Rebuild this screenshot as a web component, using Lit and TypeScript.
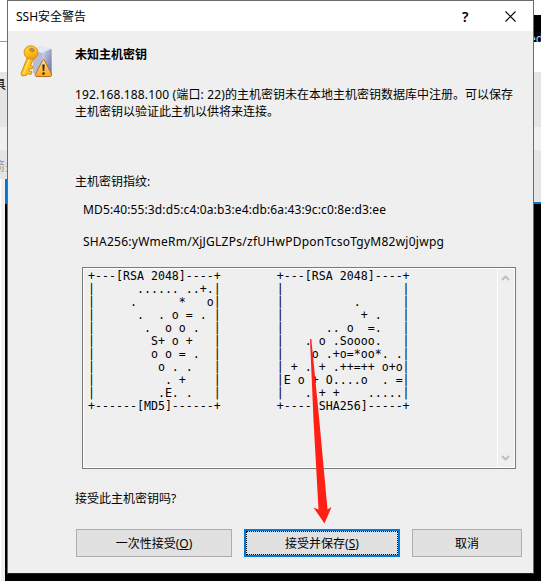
import { LitElement, html, css } from "lit";
import { customElement } from "lit/decorators.js";

const MD5_ART = [
  "+---[RSA 2048]----+",
  "|      ...... ..+.|",
  "|     .      *   o|",
  "|      .  . o = . |",
  "|       .  o o .  |",
  "|        S+ o +   |",
  "|        o o = .  |",
  "|         o . .   |",
  "|          . +    |",
  "|         .E. .   |",
  "+------[MD5]------+",
].join("\n");

const SHA_ART = [
  "+---[RSA 2048]----+",
  "|                 |",
  "|          .      |",
  "|           + .   |",
  "|      .. o  =.   |",
  "|   . o .Soooo.   |",
  "|    o .+o=*oo*. .|",
  "| + . + .++=++ o+o|",
  "|E o + O....o  . =|",
  "|   . + +    .....|",
  "+----[SHA256]-----+",
].join("\n");

@customElement("key-warning-icon")
class KeyWarningIcon extends LitElement {
  static styles = css`
    :host { display: block; width: 34px; height: 34px; }
    svg { display: block; }
  `;
  render() {
    return html`<svg width="34" height="34" viewBox="0 0 34 34">
      <defs>
        <linearGradient id="box" x1="0" y1="0" x2="1" y2="1">
          <stop offset="0" stop-color="#d9dcef" /><stop offset="1" stop-color="#5d66a4" />
        </linearGradient>
        <linearGradient id="gold" x1="0" y1="0" x2="1" y2="1">
          <stop offset="0" stop-color="#ffd83a" /><stop offset=".5" stop-color="#ffc019" /><stop offset="1" stop-color="#e8870a" />
        </linearGradient>
        <linearGradient id="tri" x1="0" y1="0" x2="0" y2="1">
          <stop offset="0" stop-color="#ffe083" /><stop offset="1" stop-color="#f9a51b" />
        </linearGradient>
      </defs>
      <path d="M13 5 20 1.500 31.500 4V31L24 32.500 13 28Z" fill="#b6bbd8" />
      <path d="M13 5 20 1.500 31.500 4 22 8Z" fill="#e6e8f4" />
      <path d="M22 8 31.500 4V31L22 32Z" fill="url(#box)" />
      <path d="M7.500 12 1 28.500 2 31 7 30 7.800 28.500 11 29.500 12 26.800 8.800 25.500 9.500 23.500 12 24 13 21.500 10.500 20.500 13.500 13.500Z" fill="#ffc21c" stroke="#c97808" stroke-width=".8" />
      <path d="M9.500 14 3.500 28.500" stroke="#ffe56a" stroke-width="1.300" />
      <ellipse cx="11" cy="7.500" rx="7" ry="6.700" fill="url(#gold)" stroke="#d08a12" stroke-width=".8" transform="rotate(20 11 7.500)" />
      <ellipse cx="12" cy="5" rx="2.400" ry="1.600" fill="#9498b4" stroke="#bd7508" stroke-width=".8" transform="rotate(20 12 5)" />
      <path d="M22.500 15.500Q23.500 14.500 24.500 15.500L31.500 29Q32 31 30.500 31.500H16Q14.500 31 15.500 29Z" fill="url(#tri)" stroke="#b97320" stroke-width="1" />
      <path d="M22.300 19.500H24.700L24.200 26H22.800Z" fill="#332615" />
      <circle cx="23.500" cy="28.500" r="1.300" fill="#332615" />
    </svg>`;
  }
}

@customElement("app-root")
class AppRoot extends LitElement {
  static styles = css`
    :host {
      display: grid; grid-template-columns: 7px 527px 7px; width: 541px; height: 581px; overflow: hidden;
      box-sizing: border-box; background: #000; color: #000;
      font: 12px/17px "Noto Sans", "Noto Sans CJK SC", sans-serif;
    }
    .side { display: flex; flex-direction: column; overflow: hidden; background: #fff; height: 581px; }
    .side > div { flex: none; overflow: hidden; }
    .gap { height: 41px; }
    .rule { height: 1px; background: #999; }
    .blank { height: 30px; }
    .tool { height: 55px; background: #e5e5e5; }
    .tool span { display: block; margin: 4px 0 0 -6px; width: 13px; white-space: nowrap; }
    .band { height: 23px; background: #f0f0f0; }
    .tab { height: 29px; background: #e5e5e5; color: #999; }
    .tab span { display: block; margin: 8px 0 0 -7px; width: 24px; white-space: nowrap; }
    .side > .edge { flex: 1; background: #fff; display: flex; }
    .edge .w { width: 1px; background: #fff; }
    .edge .g { width: 4px; background: #f0f0f0; }
    .edge .k { width: 2px; background: linear-gradient(#0078d7 25px, #000 25px); }
    .r1 { height: 15px; }
    .r2 { height: 27px; background: #000; color: #c0d8f0; }
    .r2 span { display: block; margin: 15px 0 0 -5px; }
    .r3 { height: 30px; }
    .r4 { height: 52px; background: #e5e5e5; }
    .r5 { height: 2px; background: #0078d7; }
    .side > .r6 { flex: 1; background: #000; }
    .dialog {
      box-sizing: border-box; width: 527px; height: 574px; border: 1px solid #6b6b6b; border-bottom-color: #222;
      background: #efefef; display: flex; flex-direction: column; position: relative;
    }
    .titlebar { height: 30px; flex: none; background: #fff; display: flex; align-items: center; padding-left: 8px; }
    .title { flex: 1; }
    .help { width: 10px; margin-right: 33px; font-size: 14px; font-weight: 600; }
    .close { width: 11px; height: 11px; margin-right: 17px; }
    .body { flex: 1; display: flex; }
    .iconcol { width: 67px; flex: none; padding: 14px 0 0 12px; box-sizing: border-box; }
    .content { width: 448px; display: flex; flex-direction: column; }
    .heading { font-weight: 700; margin-top: 15px; height: 17px; }
    .message { margin-top: 23px; height: 34px; white-space: nowrap; }
    .message span { letter-spacing: .15px; }
    .label { margin-top: 53px; height: 17px; }
    .hash { margin: 11px 0 0 8px; height: 17px; white-space: nowrap; letter-spacing: .125px; }
    .hash + .hash { margin-top: 15px; letter-spacing: .26px; }
    .panel {
      margin: 17px 0 0 7px; width: 434px; height: 202px; box-sizing: border-box; flex: none;
      border: 1px solid #7a7a7a; box-shadow: inset 0 0 0 1px #fff; display: flex; padding: 1px;
    }
    .arts { flex: 1; display: flex; gap: 56px; padding: 1px 0 0 4px; }
    pre { margin: 0; font: 11.627px/13px "DejaVu Sans Mono", monospace; }
    .scroll {
      width: 17px; border-left: 1px solid #fff; box-sizing: border-box; display: flex; flex-direction: column;
      justify-content: space-between; padding: 5px 0 6px 3px;
    }
    .question { margin-top: 21px; height: 17px; }
    .buttons { display: flex; gap: 12px; margin: 22px 0 0 1px; }
    .button {
      width: 156px; height: 28px; box-sizing: border-box; background: #e1e1e1; border: 1px solid #adadad;
      display: flex; align-items: center; justify-content: center; flex: none;
    }
    .default { border: 2px solid #0078d7; }
    .default span { width: 100%; height: 100%; box-sizing: border-box; border: 1px dotted #000; text-align: center; line-height: 23px; }
    .cancel { width: 110px; }
    .arrow { position: absolute; left: 290px; top: 330px; }
  `;
  render() {
    return html`
      <div class="side">
        <div class="gap"></div><div class="rule"></div><div class="blank"></div>
        <div class="tool"><span>具</span></div>
        <div class="band"></div>
        <div class="tab"><span>箭头</span></div>
        <div class="edge"><div class="w"></div><div class="g"></div><div class="k"></div></div>
      </div>
      <div class="dialog">
        <div class="titlebar">
          <span class="title">SSH安全警告</span>
          <span class="help">?</span>
          <svg class="close" viewBox="0 0 11 11"><path d="M.5 .5 10.500 10.500M10.500 .5 .5 10.500" stroke="#000" stroke-width="1.100" /></svg>
        </div>
        <div class="body">
          <div class="iconcol"><key-warning-icon></key-warning-icon></div>
          <div class="content">
            <div class="heading">未知主机密钥</div>
            <div class="message"><span>192.168.188.100 (端口: 22)</span>的主机密钥未在本地主机密钥数据库中注册。可以保存<br />主机密钥以验证此主机以供将来连接。</div>
            <div class="label">主机密钥指纹:</div>
            <div class="hash">MD5:40:55:3d:d5:c4:0a:b3:e4:db:6a:43:9c:c0:8e:d3:ee</div>
            <div class="hash">SHA256:yWmeRm/XjJGLZPs/zfUHwPDponTcsoTgyM82wj0jwpg</div>
            <div class="panel">
              <div class="arts"><pre>${MD5_ART}</pre><pre>${SHA_ART}</pre></div>
              <div class="scroll">
                <svg width="9" height="8" viewBox="0 0 9 8"><path d="M1 6 4.500 2.500 8 6" fill="none" stroke="#bfbfbf" stroke-width="2" /></svg>
                <svg width="9" height="8" viewBox="0 0 9 8"><path d="M1 3 4.500 6.500 8 3" fill="none" stroke="#bfbfbf" stroke-width="2" /></svg>
              </div>
            </div>
            <div class="question">接受此主机密钥吗?</div>
            <div class="buttons">
              <div class="button"><span>一次性接受(<u>O</u>)</span></div>
              <div class="button default"><span>接受并保存(<u>S</u>)</span></div>
              <div class="button cancel">取消</div>
            </div>
          </div>
        </div>
        <svg class="arrow" width="50" height="200" viewBox="298 331 50 200">
          <path d="M310 339H311.300L319.300 420 327.500 509.500 331.500 507 324.500 523.500 313.500 507.500 318.500 509.500 313.500 420Z" fill="#ff2015" />
        </svg>
      </div>
      <div class="side">
        <div class="r1"></div><div class="r2"><span>ed</span></div><div class="r3"></div>
        <div class="tool"></div><div class="band"></div><div class="r4"></div><div class="r5"></div><div class="r6"></div>
      </div>
    `;
  }
}
